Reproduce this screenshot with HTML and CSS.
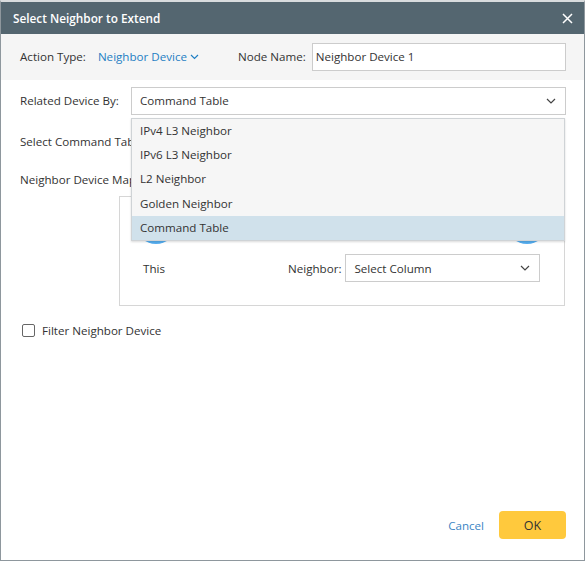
FILE: index.html
```html
<!DOCTYPE html>
<html lang="en">
<head>
    <meta charset="UTF-8">
    <title>Select Neighbor to Extend</title>
    <link rel="stylesheet" href="styles.css">
</head>
<body>
    <div class="dialog">
        <div class="dialog-header">
            <span class="dialog-title">Select Neighbor to Extend</span>
            <svg class="close-icon" width="11" height="11" viewBox="0 0 11 11">
                <path d="M1 1 L10 10 M10 1 L1 10" stroke="#ffffff" stroke-width="1.5" fill="none"/>
            </svg>
        </div>

        <div class="action-bar">
            <span class="label">Action Type:</span>
            <span class="action-link">Neighbor Device
                <svg width="9" height="6" viewBox="0 0 9 6"><path d="M1 1 L4.5 4.5 L8 1" stroke="#1f7fc4" stroke-width="1.2" fill="none"/></svg>
            </span>
            <span class="label node-label">Node Name:</span>
            <div class="text-input node-input">Neighbor Device 1</div>
        </div>

        <div class="dialog-body">
            <div class="form-row">
                <span class="row-label">Related Device By:</span>
                <div class="select-wrap">
                    <div class="select">
                        <span>Command Table</span>
                        <svg width="10" height="6" viewBox="0 0 10 6"><path d="M1 1 L5 5 L9 1" stroke="#444" stroke-width="1.2" fill="none"/></svg>
                    </div>
                    <ul class="dropdown">
                        <li>IPv4 L3 Neighbor</li>
                        <li>IPv6 L3 Neighbor</li>
                        <li>L2 Neighbor</li>
                        <li>Golden Neighbor</li>
                        <li class="active">Command Table</li>
                    </ul>
                </div>
            </div>

            <div class="form-row text-row">
                <span class="row-label">Select Command Table:</span>
            </div>

            <div class="form-row text-row mapping-row">
                <span class="row-label">Neighbor Device Mapping:</span>
            </div>

            <div class="mapping-box">
                <div class="device-icons">
                    <span class="device-dot"></span>
                    <span class="device-dot"></span>
                </div>
                <div class="mapping-fields">
                    <span class="this-label">This</span>
                    <span class="neighbor-label">Neighbor:</span>
                    <div class="select small-select">
                        <span>Select Column</span>
                        <svg width="10" height="6" viewBox="0 0 10 6"><path d="M1 1 L5 5 L9 1" stroke="#444" stroke-width="1.2" fill="none"/></svg>
                    </div>
                </div>
            </div>

            <label class="check-row">
                <span class="checkbox"></span>
                Filter Neighbor Device
            </label>
        </div>

        <div class="dialog-footer">
            <a class="cancel-link">Cancel</a>
            <button class="ok-button">OK</button>
        </div>
    </div>
</body>
</html>
```

FILE: styles.css
```css
body {
    margin: 0;
    font-family: "Open Sans", Arial, sans-serif;
    font-size: 11.6px;
    color: #333333;
    background: #ffffff;
}

.dialog {
    width: 585px;
    height: 561px;
    box-sizing: border-box;
    border: 1px solid #8e979d;
    border-top: 2px solid #d9dcde;
    display: flex;
    flex-direction: column;
    position: relative;
}

.dialog-header {
    height: 32px;
    background: #546670;
    display: flex;
    align-items: center;
    justify-content: space-between;
    padding: 0 11px 0 12px;
}

.dialog-title {
    color: #ffffff;
    font-weight: 600;
    font-size: 11.8px;
}

.action-bar {
    height: 46px;
    box-sizing: border-box;
    background: #f5f5f5;
    display: flex;
    align-items: center;
    padding: 0 18px 1px 19px;
}

.label {
    color: #333333;
}

.action-link {
    color: #1f7fc4;
    margin-left: 12px;
    display: flex;
    align-items: center;
    gap: 3px;
}

.action-link svg {
    margin-top: 1px;
}

.node-label {
    margin-left: 39px;
}

.text-input {
    height: 28px;
    box-sizing: border-box;
    border: 1px solid #cccccc;
    background: #ffffff;
    padding: 0 3px;
    display: flex;
    align-items: center;
}

.node-input {
    margin-left: 6px;
    flex: 1;
}

.dialog-body {
    flex: 1;
    padding: 7px 18px 0 19px;
}

.form-row {
    display: flex;
    align-items: center;
    height: 28px;
}

.form-row:first-child span {
    margin-top: -2px;
}

.row-label {
    width: 111px;
    flex-shrink: 0;
}

.text-row {
    margin-top: 12px;
    white-space: nowrap;
}

.mapping-row {
    margin-top: 10px;
}

.select-wrap {
    flex: 1;
    position: relative;
}

.select {
    height: 28px;
    box-sizing: border-box;
    border: 1px solid #cccccc;
    background: #ffffff;
    display: flex;
    align-items: center;
    justify-content: space-between;
    padding: 0 9px 0 8px;
}

.dropdown {
    position: absolute;
    top: 31px;
    left: 0;
    right: 1px;
    margin: 0;
    padding: 0;
    list-style: none;
    background: #f6f6f6;
    border: 1px solid #cfd3d6;
    box-shadow: 0 1px 2px rgba(0, 0, 0, 0.15);
    z-index: 2;
}

.dropdown li {
    height: 24.2px;
    line-height: 24px;
    padding-left: 8px;
}

.dropdown li.active {
    background: #d0e1eb;
}

.mapping-box {
    margin: 3px 1px 0 99px;
    height: 110px;
    box-sizing: border-box;
    border: 1px solid #d6d6d6;
    padding: 7px 0 0 0;
}

.device-icons {
    display: flex;
    justify-content: space-between;
    padding: 0 17px 0 16px;
}

.device-dot {
    width: 40px;
    height: 40px;
    border-radius: 50%;
    background: #55aef0;
}

.mapping-fields {
    display: flex;
    align-items: center;
    margin-top: 10px;
    padding: 0 24px 0 23px;
}

.this-label {
    width: 145px;
}

.neighbor-label {
    margin-right: 4px;
}

.small-select {
    flex: 1;
    margin-left: 0;
}

.check-row {
    display: flex;
    align-items: center;
    gap: 7px;
    margin-top: 17px;
    padding-left: 2px;
}

.checkbox {
    width: 11px;
    height: 11px;
    border: 1px solid #666666;
    border-radius: 2px;
    background: #ffffff;
}

.dialog-footer {
    display: flex;
    justify-content: flex-end;
    align-items: center;
    gap: 15px;
    padding: 0 18px 21px 0;
}

.cancel-link {
    color: #3b85c4;
    cursor: pointer;
}

.ok-button {
    width: 67px;
    height: 28px;
    border: none;
    border-radius: 4px;
    background: #ffc93d;
    color: #333333;
    font-family: "Open Sans", Arial, sans-serif;
    font-size: 12.5px;
    cursor: pointer;
}
```
